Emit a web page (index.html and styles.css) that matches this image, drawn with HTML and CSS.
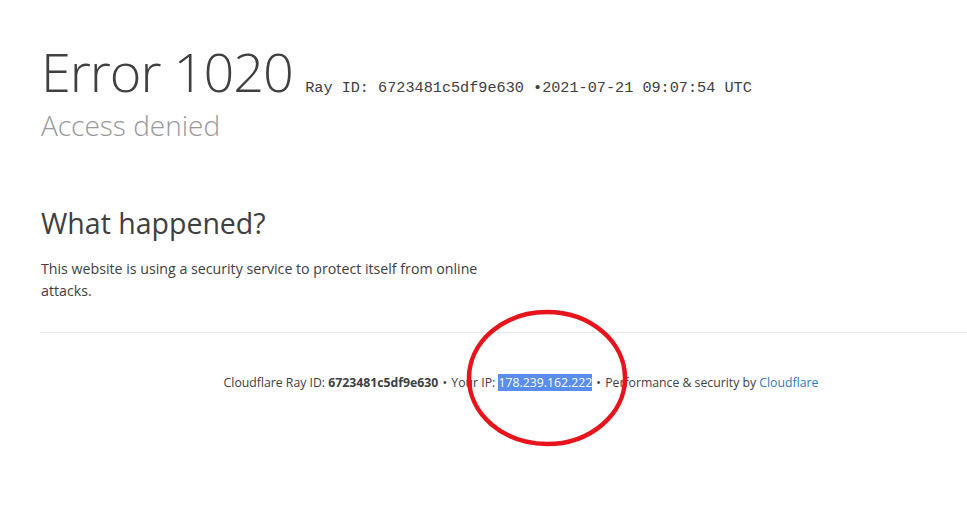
FILE: index.html
```html
<!DOCTYPE html>
<html lang="en">
<head>
  <meta charset="UTF-8" />
  <meta name="viewport" content="width=device-width, initial-scale=1.0">
  <title>Access denied | Cloudflare</title>
  <link rel="stylesheet" href="styles.css">
</head>
<body>
  <div class="wrapper">
    <div class="header">
      <h1>
        <span class="code">Error 1020</span>
        <small class="ray">Ray ID: 6723481c5df9e630 &bull;2021-07-21 09:07:54 UTC</small>
      </h1>
      <h2 class="subhead">Access denied</h2>
    </div>

    <div class="section">
      <h2>What happened?</h2>
      <p>This website is using a security service to protect itself from online attacks.</p>
    </div>

    <div class="footer">
      <p>
        <span>Cloudflare Ray ID: <strong>6723481c5df9e630</strong></span>
        <span class="sep">&bull;</span>
        <span>Your IP: <span class="selected">178.239.162.222</span></span>
        <span class="sep">&bull;</span>
        <span>Performance &amp; security by <a href="#">Cloudflare</a></span>
      </p>
      <svg class="circle" width="168" height="142" viewBox="0 0 168 142">
        <ellipse cx="84" cy="71" rx="78" ry="66" fill="none" stroke="#e8141c" stroke-width="4.5"/>
      </svg>
    </div>
  </div>
</body>
</html>
```
FILE: styles.css
```css
html { overflow: hidden; }
body { margin: 0; padding: 0; min-height: 512px; background: #fff; font-family: "Open Sans", "Noto Sans", sans-serif; color: #404040; }
.wrapper { width: 960px; margin-left: 41px; }

.header { padding-top: 44px; }
h1 { margin: 0; font-weight: 300; line-height: 1; white-space: nowrap; }
.code { font-size: 54px; letter-spacing: -1px; }
.ray { font-family: "Liberation Mono", monospace; font-size: 15.2px; color: #404040; margin-left: 4px; }
.subhead { margin: 8px 0 0; font-size: 28px; font-weight: 300; color: #999; }

.section { margin-top: 60px; width: 480px; }
.section h2 { margin: 0; font-size: 28.5px; font-weight: 400; color: #404040; }
.section p { margin: 16px 0 0; font-size: 14.2px; line-height: 22px; }

.footer { position: relative; margin-top: 30px; padding: 41px 0 130px; border-top: 1px solid #e6e6e6; text-align: center; font-size: 12.25px; }
.footer p { margin: 0; }
.sep { margin: 0 1px; }
.selected { background: #5a8df0; color: #fff; }
.footer a { color: #2f7bbf; text-decoration: none; }
.circle { position: absolute; left: 422px; top: -26px; }
```
